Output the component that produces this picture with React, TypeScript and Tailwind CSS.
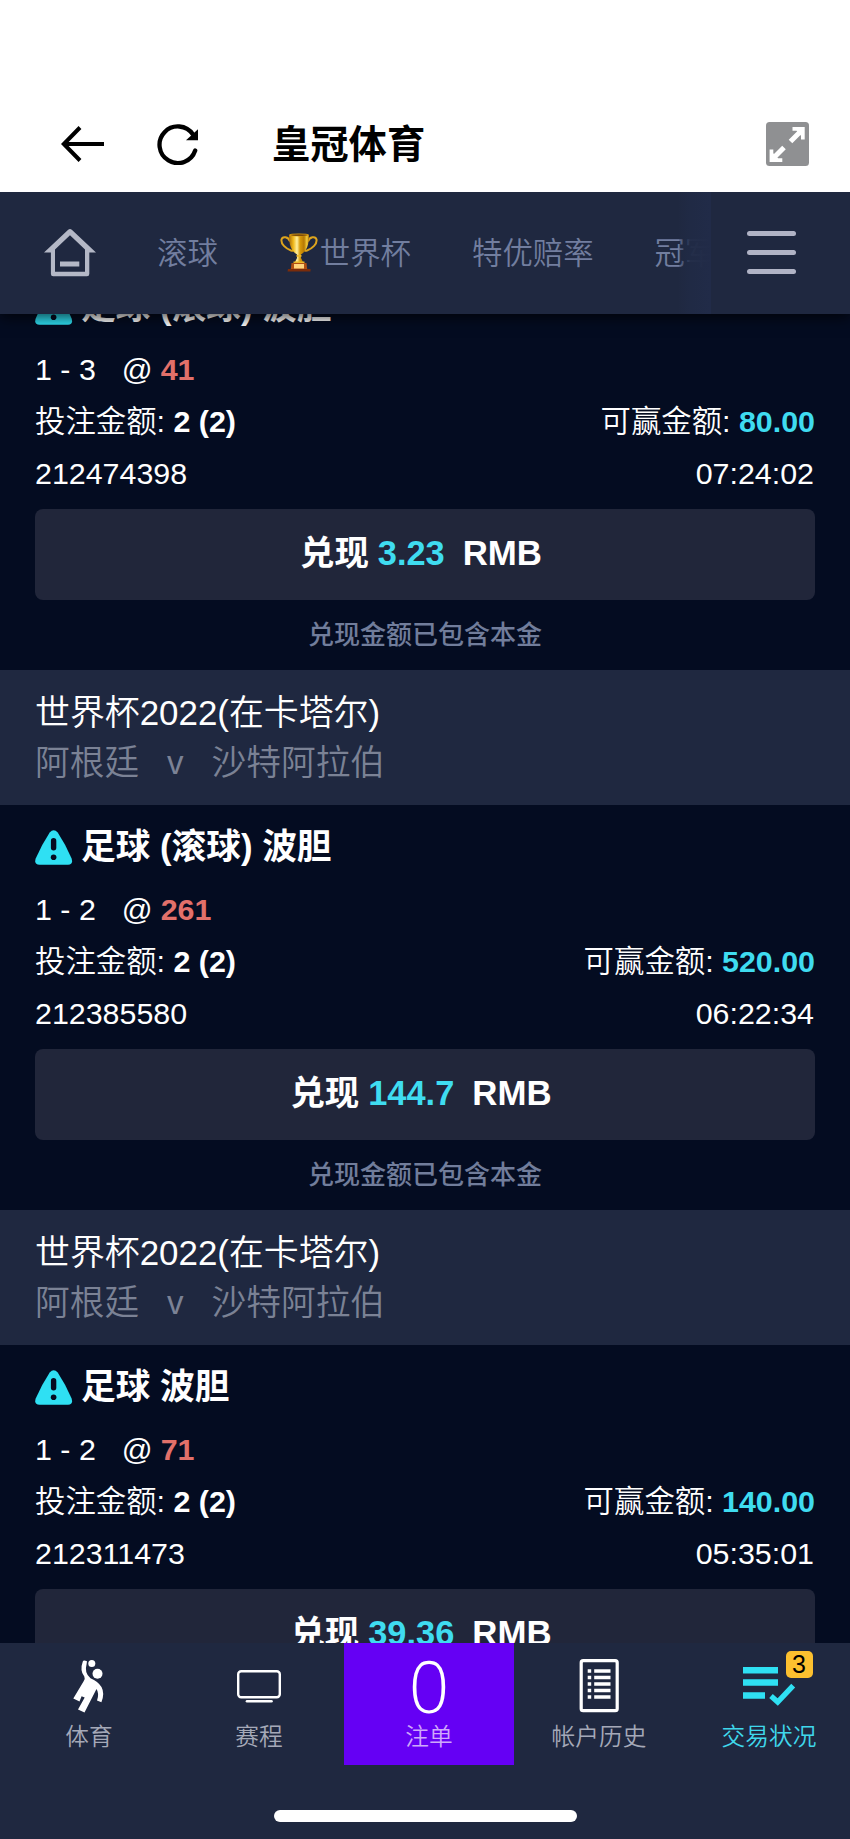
import type { ReactNode } from "react";

type Bet = {
  id: string;
  time: string;
  title: string;
  score: string;
  odds: string;
  win: string;
  cash: string;
  match?: { league: string; home: string; away: string };
};

const match = { league: "世界杯2022(在卡塔尔)", home: "阿根廷", away: "沙特阿拉伯" };

const bets: Bet[] = [
  { id: "212474398", time: "07:24:02", title: "足球 (滚球) 波胆", score: "1 - 3", odds: "41", win: "80.00", cash: "3.23" },
  { id: "212385580", time: "06:22:34", title: "足球 (滚球) 波胆", score: "1 - 2", odds: "261", win: "520.00", cash: "144.7", match },
  { id: "212311473", time: "05:35:01", title: "足球 波胆", score: "1 - 2", odds: "71", win: "140.00", cash: "39.36", match },
];

function BackIcon() {
  return (
    <svg width="44" height="36" viewBox="0 0 44 36" fill="none" stroke="#000" strokeWidth="4">
      <path d="M43 18H3M19 1.5 2.8 18 19 34.5" />
    </svg>
  );
}

function ReloadIcon() {
  return (
    <svg width="42" height="42" viewBox="0 0 42 42">
      <path d="M38.200 27.500A18.300 18.300 0 1 1 36 11.500" fill="none" stroke="#000" strokeWidth="4.300" strokeLinecap="round" />
      <path d="M29 17.300 41 6.300v11z" fill="#000" />
    </svg>
  );
}

function ExpandIcon() {
  return (
    <svg width="43" height="44" viewBox="0 0 43 44">
      <rect width="43" height="44" rx="3.5" fill="#8f9092" />
      <path d="M24.500 19.500 35 9M18 25.500 7.500 36" stroke="#fff" strokeWidth="5" />
      <path d="M26.500 5h12.200v12.500h-3.700v-3.700L30.500 8.700h-4zM16.300 40H3.600V27.500h3.700v3.700L12 36.300h4.300z" fill="#fff" />
    </svg>
  );
}

function HomeIcon() {
  return (
    <svg width="52" height="48" viewBox="0 0 52 48" fill="#b4b8c6">
      <path
        fillRule="evenodd"
        d="M24.200.8Q26-.7 27.800.8L52 23.500H45.300V45Q45.300 47.300 43 47.300H9.200Q6.900 47.300 6.900 45V23.500H0zM26 6.200 11 20.500V42.800H41V20.500z"
      />
      <path d="M16 32.500h19.300v5H16z" />
    </svg>
  );
}

function TrophyIcon() {
  return (
    <svg width="38" height="39" viewBox="0 0 38 39">
      <defs>
        <linearGradient id="cup" x1="0" x2="1">
          <stop offset="0" stopColor="#a86a08" />
          <stop offset=".22" stopColor="#f0b91c" />
          <stop offset=".4" stopColor="#fff0a0" />
          <stop offset=".55" stopColor="#d89a08" />
          <stop offset=".75" stopColor="#b57804" />
          <stop offset=".9" stopColor="#f5cf3b" />
          <stop offset="1" stopColor="#a86a08" />
        </linearGradient>
      </defs>
      <path
        d="M10 8.500C8.500 3.800 2.500 2.800 1.500 6.500 .8 11 5.500 15.500 11 17.500q3 1 1.500-1M28 8.500C29.500 3.800 35.500 2.800 36.500 6.500 37.200 11 32.500 15.500 27 17.500q-3 1-1.500-1"
        fill="none"
        stroke="#dda41d"
        strokeWidth="2"
      />
      <path d="M9 2C9 12 11 17.500 17 21.500V25l-2.500 5h9L21 25v-3.500C27 17.500 29 12 29 2z" fill="url(#cup)" />
      <ellipse cx="19" cy="1.900" rx="10" ry="1.500" fill="#d79a12" />
      <ellipse cx="19" cy="2.100" rx="8.400" ry=".8" fill="#7e4d08" />
      <path d="M16.500 22h5v1.800h-5zM13.500 28.500h11v1.700h-11z" fill="#eab529" />
      <path d="M11.500 30h15l.7 6H10.800z" fill="#b04f13" />
      <path d="M14 31h10v4.500H14z" fill="#ffd47c" />
      <path d="M8 36h22.500v2.500H7.500z" fill="#7a2c0b" />
    </svg>
  );
}

function WarningIcon() {
  return (
    <svg width="38" height="35" viewBox="0 0 38 35">
      <path d="M14.700 2.500Q18.700-2 22.700 2.500 31 15 36.600 28.500 38.500 34.700 33 34.700H4.500Q-1.200 34.700.7 28.500 6.500 15 14.700 2.500z" fill="#2fe0f3" />
      <rect x="15.900" y="8" width="5.400" height="12.500" rx="2.700" fill="#050c21" />
      <circle cx="18.600" cy="27.200" r="2.800" fill="#050c21" />
    </svg>
  );
}

function PlayerIcon() {
  return (
    <svg width="32" height="54" viewBox="0 0 32 54" fill="#fff">
      <circle cx="18.800" cy="4.600" r="3.500" />
      <circle cx="24.500" cy="14.800" r="5" />
      <path d="M9.800 2.400Q10.500.9 14 2.300L13.600 5Q11 14 17.500 19.300 25 22.500 28.500 28 32 34.500 28.400 43.200L24 41.500Q26.500 34.500 23.500 30L11.500 53.500 5 50.500 11.700 38.500 8.600 37.300 6.500 42.400.3 39.500 10.500 22.500Q12.500 19.500 11.300 17.500 6.500 11.500 9.800 2.400z" />
    </svg>
  );
}

function ScreenIcon() {
  return (
    <svg width="44" height="33" viewBox="0 0 44 33" fill="none" stroke="#fff">
      <rect x="1.200" y="1.200" width="41.600" height="26" rx="3" strokeWidth="2.400" />
      <path d="M10 31.200h24.500" strokeWidth="2.600" strokeLinecap="round" />
    </svg>
  );
}

function HistoryIcon() {
  return (
    <svg width="40" height="54" viewBox="0 0 40 54">
      <rect x="2.200" y="1.700" width="36" height="50" rx="2" fill="none" stroke="#fff" strokeWidth="3.200" />
      <path
        d="M8.700 12h3.500M15.200 12H31.500M8.700 18.500h3.500M15.200 18.500H31.500M8.700 25h3.500M15.200 25H31.500M8.700 31.500h3.500M15.200 31.500H31.500M8.700 38h3.500M15.200 38H31.500"
        stroke="#fff"
        strokeWidth="3.500"
      />
    </svg>
  );
}

function StatusIcon() {
  return (
    <svg width="53" height="39" viewBox="0 0 53 39">
      <path d="M0 0h35v6.500H0zM0 12.300h35v6.500H0zM0 25.200h22v6.500H0z" fill="#2fe0f3" />
      <path d="m28 29 6.700 6L50.200 18.700" fill="none" stroke="#2fe0f3" strokeWidth="5.400" />
    </svg>
  );
}

function BetCard({ bet }: { bet: Bet }) {
  return (
    <section>
      {bet.match && (
        <header className="h-[135px] bg-[#1f2840] px-[35px] pt-[18px] text-[34.900px] leading-[50px] font-[350]">
          <h2>{bet.match.league}</h2>
          <p className="flex text-[34.700px] text-[#7b8295]">
            {bet.match.home}
            <span className="mr-[28px] ml-[28px] text-[33px]">v</span>
            {bet.match.away}
          </p>
        </header>
      )}
      <div className="h-[405px] px-[35px] pt-[7px] text-[30.400px] leading-[52px]">
        <h3 className="flex h-[71px] items-center gap-2 pb-px text-[34.700px] font-bold">
          <WarningIcon />
          {bet.title}
        </h3>
        <p className="flex font-[350]">
          {bet.score}
          <span className="mr-2 ml-[26px]">@</span>
          <b className="font-bold text-[#e2706a]">{bet.odds}</b>
        </p>
        <p className="flex justify-between font-[350]">
          <span>
            投注金额: <b className="font-bold">2 (2)</b>
          </span>
          <span>
            可赢金额: <b className="font-bold text-[#3fdcf0]">{bet.win}</b>
          </span>
        </p>
        <p className="flex justify-between pr-px">
          <span>{bet.id}</span>
          <span>{bet.time}</span>
        </p>
        <button className="mt-[10px] flex h-[91px] w-full items-center justify-center rounded-lg bg-[#21263a] pr-[8px] pb-[3px] text-[34.400px] font-bold">
          兑现
          <b className="mr-[9px] ml-[9px] text-[#3fdcf0]">{bet.cash}</b>
          <b className="ml-[9px] text-[34.800px]">RMB</b>
        </button>
        <p className="h-[70px] text-center text-[26px] leading-[71px] font-medium text-[#717d9b]">兑现金额已包含本金</p>
      </div>
    </section>
  );
}

function Tab({ icon, label, className = "" }: { icon: ReactNode; label: string; className?: string }) {
  return (
    <div className={`flex h-[122px] w-[170px] shrink-0 flex-col items-center ${className}`}>
      <div className="flex h-[76px] items-center pt-[10px]">{icon}</div>
      <span className="text-[23.700px] leading-[37px] font-[350]">{label}</span>
    </div>
  );
}

export default function App() {
  return (
    <div className="flex h-[1839px] w-[850px] flex-col overflow-hidden bg-[#040c21] font-['Liberation_Sans','Noto_Sans_CJK_SC',sans-serif] text-white">
      <header className="relative z-20 flex h-[192px] shrink-0 items-center bg-white pt-[95px] pr-[41px] pl-[61px] text-black">
        <BackIcon />
        <span className="ml-[52px]">
          <ReloadIcon />
        </span>
        <h1 className="ml-[73px] flex-1 pt-[2px] text-[38.300px] leading-[48px] font-bold">皇冠体育</h1>
        <ExpandIcon />
      </header>

      <nav className="relative z-10 flex h-[122px] shrink-0 items-center bg-[#1f2840] pl-[44px] text-[30.400px] font-[350] text-[#727e9f] shadow-[0_3px_14px_rgba(0,0,0,0.75)]">
        <HomeIcon />
        <div className="relative flex h-full w-[615px] items-center overflow-hidden pl-[61px] whitespace-nowrap">
          <span className="pt-[2px]">滚球</span>
          <span className="ml-[62px] flex items-center gap-[2px]">
            <TrophyIcon />
            <span className="pt-[2px]">世界杯</span>
          </span>
          <span className="ml-[61px] pt-[2px]">特优赔率</span>
          <span className="ml-[61px] pt-[2px]">冠军</span>
          <span className="absolute inset-y-0 right-0 w-[32px] bg-linear-to-r from-[#202a44]/20 via-[#202a45]/95 via-35% to-[#212b48]" />
        </div>
        <div className="mb-[1px] ml-9 flex w-[49px] flex-col gap-[14px]">
          <span className="h-[5px] rounded-full bg-[#b0b3c5]" />
          <span className="h-[5px] rounded-full bg-[#b0b3c5]" />
          <span className="h-[5px] rounded-full bg-[#b0b3c5]" />
        </div>
      </nav>

      <main className="h-[1329px] shrink-0 overflow-hidden">
        <div className="-mt-[49px]">
          {bets.map((bet) => (
            <BetCard key={bet.id} bet={bet} />
          ))}
        </div>
      </main>

      <footer className="flex h-[196px] shrink-0 flex-col items-center justify-between bg-[#1f2840] pb-[17px]">
        <div className="flex w-full overflow-hidden pl-1 text-[#a5a9b8]">
          <Tab icon={<PlayerIcon />} label="体育" />
          <Tab icon={<ScreenIcon />} label="赛程" />
          <Tab
            icon={<span className="font-['Open_Sans','Liberation_Sans',sans-serif] text-[71px] leading-[52px] font-light text-white">0</span>}
            label="注单"
            className="bg-[#6500f4] text-[#cfa8fb]"
          />
          <Tab icon={<HistoryIcon />} label="帐户历史" />
          <Tab
            icon={
              <span className="relative">
                <StatusIcon />
                <span className="absolute -top-[16px] left-[43px] h-[27px] w-[27px] rounded-[5px] bg-[#fcc02f] text-center text-[25px] leading-[26px] text-black">
                  3
                </span>
              </span>
            }
            label="交易状况"
            className="text-[#3fd8ec]"
          />
        </div>
        <div className="h-[12px] w-[303px] rounded-full bg-white" />
      </footer>
    </div>
  );
}
